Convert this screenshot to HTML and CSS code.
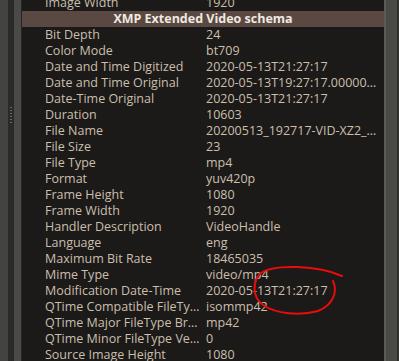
FILE: index.html
```html
<!DOCTYPE html>
<html lang="en">
<head>
<meta charset="UTF-8">
<title>Metadata</title>
<link rel="stylesheet" href="styles.css">
</head>
<body>

<div class="window">
    <div class="dock">
        <div class="dock-edge"></div>
        <div class="dock-gap">
            <div class="grip"></div>
        </div>
        <div class="dock-bar"></div>
        <div class="dock-line"></div>
    </div>

    <div class="panel">
        <div class="list">
            <div class="row"><span class="key">Image Width</span><span class="val">1920</span></div>
            <div class="section">XMP Extended Video schema</div>
            <div class="row"><span class="key">Bit Depth</span><span class="val">24</span></div>
            <div class="row"><span class="key">Color Mode</span><span class="val">bt709</span></div>
            <div class="row"><span class="key">Date and Time Digitized</span><span class="val">2020-05-13T21:27:17</span></div>
            <div class="row"><span class="key">Date and Time Original</span><span class="val">2020-05-13T19:27:17.000000000000000</span></div>
            <div class="row"><span class="key">Date-Time Original</span><span class="val">2020-05-13T21:27:17</span></div>
            <div class="row"><span class="key">Duration</span><span class="val">10603</span></div>
            <div class="row"><span class="key">File Name</span><span class="val">20200513_192717-VID-XZ2_Compact.mp4</span></div>
            <div class="row"><span class="key">File Size</span><span class="val">23</span></div>
            <div class="row"><span class="key">File Type</span><span class="val">mp4</span></div>
            <div class="row"><span class="key">Format</span><span class="val">yuv420p</span></div>
            <div class="row"><span class="key">Frame Height</span><span class="val">1080</span></div>
            <div class="row"><span class="key">Frame Width</span><span class="val">1920</span></div>
            <div class="row"><span class="key">Handler Description</span><span class="val">VideoHandle</span></div>
            <div class="row"><span class="key">Language</span><span class="val">eng</span></div>
            <div class="row"><span class="key">Maximum Bit Rate</span><span class="val">18465035</span></div>
            <div class="row"><span class="key">Mime Type</span><span class="val">video/mp4</span></div>
            <div class="row"><span class="key">Modification Date-Time</span><span class="val">2020-05-13T21:27:17</span></div>
            <div class="row"><span class="key">QTime Compatible FileType Brands</span><span class="val">isommp42</span></div>
            <div class="row"><span class="key">QTime Major FileType Brand</span><span class="val">mp42</span></div>
            <div class="row"><span class="key">QTime Minor FileType Version</span><span class="val">0</span></div>
            <div class="row"><span class="key">Source Image Height</span><span class="val">1080</span></div>
        </div>
    </div>

    <div class="scrollbar"></div>

    <!-- hand drawn mark over the screenshot -->
    <svg class="mark" width="399" height="361" viewBox="0 0 399 361">
        <path d="M333,281 C338,292 333,305 318,311 C300,316 276,314 263,305 C252,297 252,281 261,273 C274,264 318,265 342,276" fill="none" stroke="#e80c0c" stroke-width="2" stroke-linecap="round"/>
    </svg>
</div>

</body>
</html>
```

FILE: styles.css
```css
body {
    margin: 0;
    padding: 0;
    background-color: #1b1a18;
    font-family: "Open Sans", "Noto Sans", sans-serif;
    overflow: hidden;
}
.window {
    position: relative;
    display: flex;
    width: 399px;
    height: 361px;
    overflow: hidden;
}
.dock {
    display: flex;
    flex: 0 0 22px;
}
.dock-edge {
    width: 8px;
    background-color: #434341;
}
.dock-gap {
    width: 6px;
    background-color: #2a2a28;
    display: flex;
    justify-content: center;
    padding-top: 107px;
}
.grip {
    width: 2px;
    height: 16px;
    background-image: linear-gradient(#6a6a66 50%, transparent 50%);
    background-size: 2px 3px;
}
.dock-bar {
    width: 7px;
    background-color: #4a4a48;
}
.dock-line {
    width: 1px;
    background-color: #252523;
}
.panel {
    flex: 1;
    background-color: #1b1a18;
    overflow: hidden;
}
.list {
    margin-top: -5px;
}
.row {
    display: flex;
    height: 16px;
    line-height: 16px;
    font-size: 12.5px;
    color: #cbbfad;
    padding-left: 23px;
}
.key {
    width: 156px;
    margin-right: 5px;
    white-space: nowrap;
    overflow: hidden;
    text-overflow: ellipsis;
}
.val {
    width: 171px;
    white-space: nowrap;
    overflow: hidden;
    text-overflow: ellipsis;
}
.section {
    height: 16px;
    line-height: 16px;
    background-color: #5a4943;
    color: #efe9e1;
    font-weight: bold;
    font-size: 12.5px;
    text-align: center;
}
.scrollbar {
    flex: 0 0 11px;
    background-color: #494946;
    border-left: 2px solid #5a5a56;
    border-right: 2px solid #2e2e2c;
}
.mark {
    position: absolute;
    left: 0;
    top: 0;
    pointer-events: none;
}
```
